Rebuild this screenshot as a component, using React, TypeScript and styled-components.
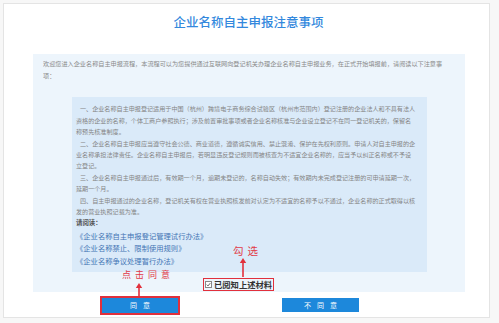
import styled, { createGlobalStyle } from "styled-components";

const GlobalStyle = createGlobalStyle`
  html, body {
    margin: 0;
    padding: 0;
    background: #f7f7f7;
    font-family: "Noto Sans CJK SC", "Noto Sans", sans-serif;
  }
`;

const Card = styled.div`
  position: relative;
  margin: 3px 9px 0 3px;
  padding: 9px 0 2px;
  background: #fff;
  border: 1px solid #e4e4e4;
`;

const Title = styled.h1`
  margin: 0;
  text-align: center;
  font-size: 12.5px;
  line-height: 18px;
  font-weight: 500;
  color: #3388dd;
  padding-left: 4px;
`;

const Panel = styled.div`
  margin: 23px 24px 0 29px;
  padding: 4px 10px 0;
  background: #edf5fc;
`;

const Intro = styled.div`
  font-size: 6.15px;
  line-height: 12px;
  color: #8a8a8a;
`;

const IntroLine = styled.div`
  height: 12px;
  white-space: nowrap;
  overflow: hidden;
`;

const Notice = styled.div`
  margin: 15px 28px 0 29px;
  padding: 6.3px 8px 5px 4px;
  background: #daeaf9;
`;

const Para = styled.p`
  margin: 0;
  font-size: 6.1px;
  line-height: 11.4px;
  color: #858585;
  text-indent: 4px;
  white-space: nowrap;
`;

const ReadLabel = styled.p`
  margin: 0;
  font-size: 6.4px;
  line-height: 11.4px;
  font-weight: 700;
  color: #555;
`;

const LawLink = styled.a<{ $first?: boolean }>`
  display: block;
  margin-top: ${(p) => (p.$first ? "1px" : "0")};
  font-size: 7.3px;
  line-height: 12.4px;
  color: #4274b4;
  text-decoration: none;
  white-space: nowrap;
`;

const CheckRow = styled.div`
  display: flex;
  padding: 6px 0 1px 160px;
`;

const RedFrame = styled.span<{ $width?: number }>`
  display: inline-flex;
  align-items: center;
  border: ${(p) => (p.$width ?? 2)}px solid #e1303c;
`;

const CheckLabel = styled.label`
  display: inline-flex;
  align-items: center;
  gap: 2px;
  height: 11px;
  padding: 0 1px;
  font-size: 8.3px;
  font-weight: 700;
  color: #333;
  white-space: nowrap;
`;

const Box = styled.span`
  display: inline-flex;
  align-items: center;
  justify-content: center;
  width: 5px;
  height: 5px;
  border: 0.8px solid #888;
  background: #fff;
`;

const ButtonRow = styled.div`
  display: flex;
  align-items: center;
  gap: 102px;
  margin-top: 4px;
  padding-left: 96px;
`;

const Button = styled.button<{ $w: number; $h: number }>`
  width: ${(p) => p.$w}px;
  height: ${(p) => p.$h}px;
  padding: 0 0 0 6px;
  border: 0;
  background: #1d88db;
  color: #fff;
  font-family: inherit;
  font-size: 7px;
  letter-spacing: 6px;
  line-height: 1;
  cursor: pointer;
`;

const Note = styled.span<{ $x: number; $y: number; $size: number; $gap: number }>`
  position: absolute;
  left: ${(p) => p.$x}px;
  top: ${(p) => p.$y}px;
  font-size: ${(p) => p.$size}px;
  letter-spacing: ${(p) => p.$gap}px;
  line-height: 1;
  color: #e13a48;
  white-space: nowrap;
`;

const ArrowSvg = styled.svg<{ $x: number; $y: number }>`
  position: absolute;
  left: ${(p) => p.$x}px;
  top: ${(p) => p.$y}px;
  overflow: visible;
`;

const Arrow = ({ x, y, len }: { x: number; y: number; len: number }) => (
  <ArrowSvg $x={x} $y={y} width="8" height={len} viewBox={`0 0 8 ${len}`}>
    <path d={`M4 3 V${len}`} stroke="#e1303c" strokeWidth="1.6" />
    <path d="M4 0 L7.2 5 L0.8 5 Z" fill="#e1303c" />
  </ArrowSvg>
);

const intro = [
  "欢迎您进入企业名称自主申报流程，本流程可以为您提供通过互联网向登记机关办理企业名称自主申报业务，在正式开始填报前，请阅读以下注意事",
  "项：",
];

const notices = [
  [
    "一、企业名称自主申报登记适用于中国（杭州）跨境电子商务综合试验区（杭州市范围内）登记注册的企业法人和不具有法人",
    "资格的企业的名称，个体工商户参照执行；涉及前置审批事项或者企业名称核准与企业设立登记不在同一登记机关的，保留名",
    "称预先核准制度。",
  ],
  [
    "二、企业名称自主申报应当遵守社会公德、商业道德，遵循诚实信用、禁止混淆、保护在先权利原则。申请人对自主申报的企",
    "业名称承担法律责任。企业名称自主申报后，若明显违反登记规则而被核查为不适宜企业名称的，应当予以纠正名称或不予设",
    "立登记。",
  ],
  [
    "三、企业名称自主申报通过后，有效期一个月，逾期未登记的，名称自动失效；有效期内未完成登记注册的可申请延期一次，",
    "延期一个月。",
  ],
  [
    "四、自主申报通过的企业名称，登记机关有权在营业执照核发前对认定为不适宜的名称予以不通过，企业名称的正式取得以核",
    "发的营业执照记载为准。",
  ],
];

const laws = [
  "《企业名称自主申报登记管理试行办法》",
  "《企业名称禁止、限制使用规则》",
  "《企业名称争议处理暂行办法》",
];

export default function App() {
  return (
    <>
      <GlobalStyle />
      <Card>
        <Title>企业名称自主申报注意事项</Title>
        <Panel>
          <Intro>
            {intro.map((line) => (
              <IntroLine key={line}>{line}</IntroLine>
            ))}
          </Intro>
          <Notice>
            {notices.map((lines, i) => (
              <Para key={i}>
                {lines.map((line, j) => (
                  <span key={j}>
                    {j > 0 && <br />}
                    {line}
                  </span>
                ))}
              </Para>
            ))}
            <ReadLabel>请阅读：</ReadLabel>
            {laws.map((law, i) => (
              <LawLink key={law} href="#" $first={i === 0}>
                {law}
              </LawLink>
            ))}
          </Notice>
          <CheckRow>
            <RedFrame $width={1.5}>
              <CheckLabel>
                <Box>
                  <svg width="5" height="5" viewBox="0 0 10 10">
                    <path d="M1.5 5.2 L4 7.8 L8.6 2.2" fill="none" stroke="#555" strokeWidth="1.8" />
                  </svg>
                </Box>
                已阅知上述材料
              </CheckLabel>
            </RedFrame>
          </CheckRow>
        </Panel>
        <ButtonRow>
          <RedFrame>
            <Button $w={76} $h={15}>同意</Button>
          </RedFrame>
          <Button $w={77} $h={14}>不同意</Button>
        </ButtonRow>
        <Note $x={229} $y={242} $size={10.5} $gap={4}>勾选</Note>
        <Arrow x={235} y={254} len={19} />
        <Note $x={118} $y={266} $size={9} $gap={4}>点击同意</Note>
        <Arrow x={131} y={279} len={14} />
      </Card>
    </>
  );
}
